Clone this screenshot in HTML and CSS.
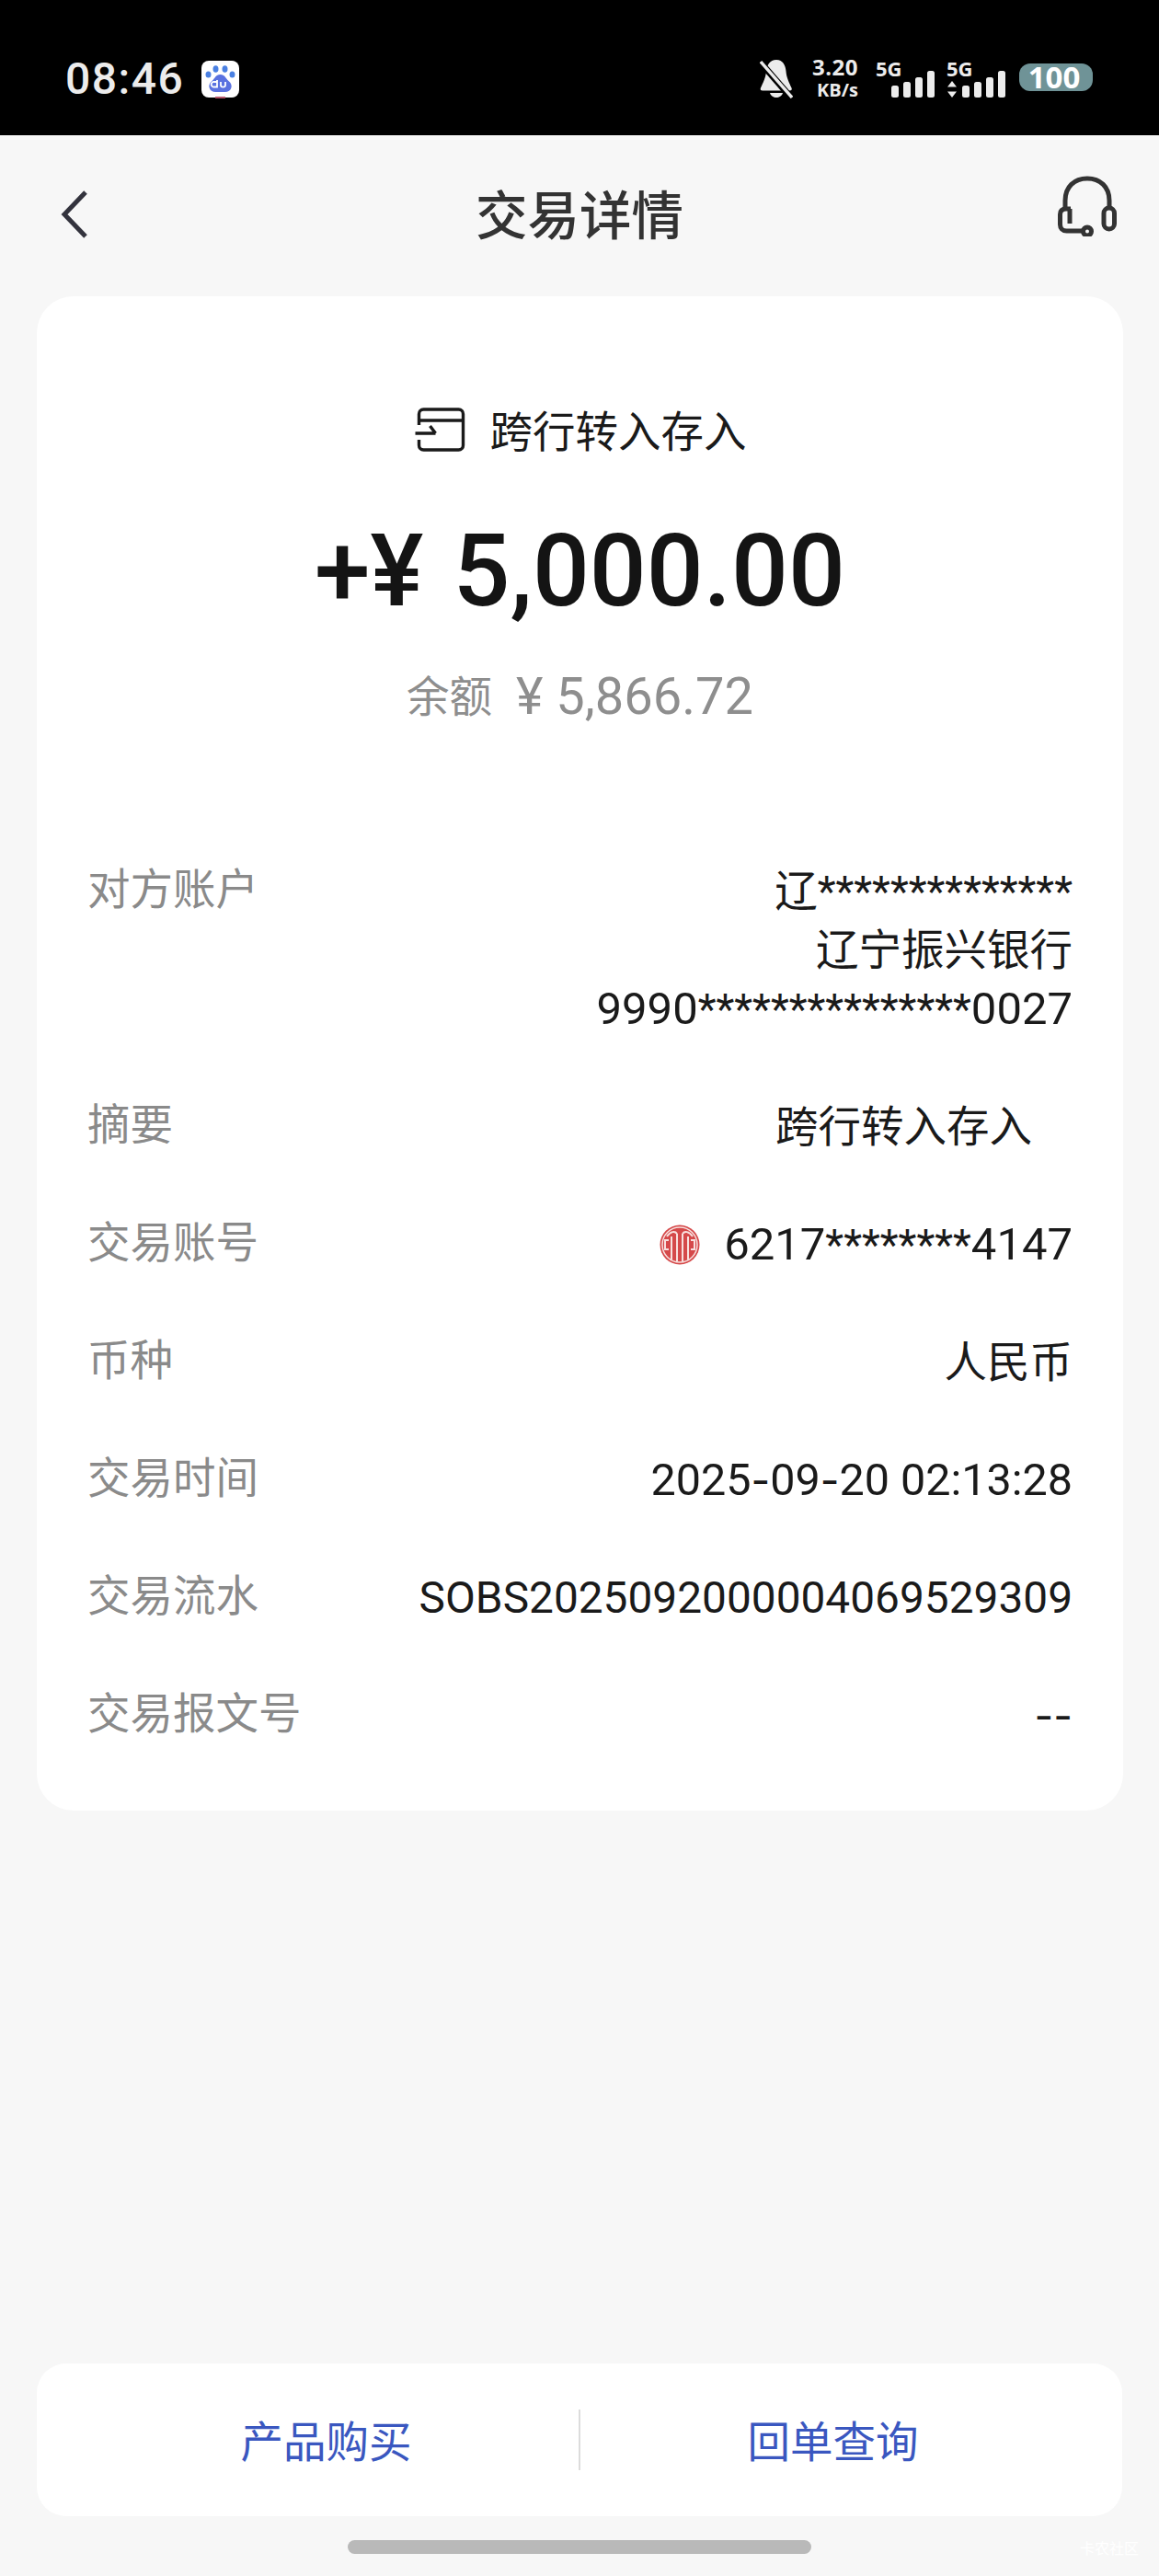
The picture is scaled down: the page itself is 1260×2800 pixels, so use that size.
FILE: index.html
```html
<!DOCTYPE html>
<html lang="zh-CN">
<head>
<meta charset="utf-8">
<title>交易详情</title>
<link rel="stylesheet" href="styles.css">
</head>
<body>
<div class="page">
  <header class="status">
    <div class="status-left">
      <span class="time">08:46</span>
      <svg class="baidu" viewBox="0 0 41 41">
        <rect width="41" height="40" rx="8" fill="#fff"/>
        <rect x="15" y="39" width="11" height="2" fill="#b5566a"/>
        <g fill="#4a80e2">
          <ellipse cx="7.5" cy="15" rx="3" ry="3.6"/>
          <ellipse cx="15.5" cy="9" rx="3" ry="3.8"/>
          <ellipse cx="25.5" cy="9" rx="3" ry="3.8"/>
          <ellipse cx="33.5" cy="15" rx="3" ry="3.6"/>
        </g>
        <path d="M20.5 15c5 0 6 4.500 9 7 3 2.500 3.500 5 3 7-.7 3.300-3.500 5-7 5h-10c-3.500 0-6.300-1.700-7-5-.5-2 0-4.500 3-7 3-2.500 4-7 9-7z" fill="#5a72e0"/>
        <path d="M17 21v7.500h-3a2.800 2.800 0 1 1 0-5.500h3M21 23v3.500c0 2.800 5 2.800 5 0V23" fill="none" stroke="#fff" stroke-width="1.800"/>
      </svg>
    </div>
    <div class="status-right">
      <svg class="bell" viewBox="0 0 36 43">
        <path d="M18 1c7 0 10 6 10.500 12.500.5 7 3.500 12.500 6 18 .8 2 0 3-2 3H3c-2 0-2.800-1-2-3 2.500-5.500 5.500-11 6-18C7.500 7 11 1 18 1z" fill="#ececec"/>
        <path d="M11 37h14c-1 3.500-4 5-7 5s-6-1.500-7-5z" fill="#ececec"/>
        <path d="M1 4l33 38" stroke="#000" stroke-width="7"/>
        <path d="M1 3l34 39" stroke="#ececec" stroke-width="3.400"/>
      </svg>
      <div class="speed">
        <span class="speed-num">3.20</span>
        <span class="speed-unit">KB/s</span>
      </div>
      <div class="signal">
        <span class="net">5G</span>
        <div class="bars">
          <i class="bar b1"></i><i class="bar b2"></i><i class="bar b3"></i><i class="bar b4"></i>
        </div>
      </div>
      <div class="signal signal-data">
        <span class="net">5G</span>
        <svg class="updown" viewBox="0 0 10 18"><path d="M5 0l5 6.500H0zM5 18L0 11.500h10z" fill="#ececec"/></svg>
        <div class="bars">
          <i class="bar b1"></i><i class="bar b2"></i><i class="bar b3"></i><i class="bar b4"></i>
        </div>
      </div>
      <span class="battery">100</span>
    </div>
  </header>

  <nav class="nav">
    <svg class="back" viewBox="0 0 30 52"><path d="M27 2L4 26l23 24" fill="none" stroke="#33333d" stroke-width="5"/></svg>
    <h1 class="title">交易详情</h1>
    <svg class="headset" viewBox="0 0 64 66">
      <g fill="none" stroke="#333" stroke-width="5">
        <path d="M8 35V27C8 12 18 3 32 3s24 9 24 24v8"/>
        <rect x="50" y="35" width="11.500" height="23" rx="5.700"/>
        <path d="M14 36H9C5 36 2.500 38 2.500 42v11c0 4 2.500 7 7 7H27"/>
        <path d="M13 36v16"/>
        <circle cx="32" cy="60.500" r="4.500"/>
      </g>
    </svg>
  </nav>

  <main class="card">
    <div class="summary">
      <div class="kind">
        <svg class="kind-icon" viewBox="0 0 56 48">
          <g fill="none" stroke="#1a1a1a" stroke-width="3.400">
            <path d="M5 19V7c0-3 2-5 5-5h38c3 0 5 2 5 5v34c0 3-2 5-5 5H10c-3 0-5-2-5-5v-6"/>
            <path d="M5 14h48"/>
            <path d="M1 28h22M17 20l6 8"/>
          </g>
        </svg>
        <span class="kind-text">跨行转入存入</span>
      </div>
      <div class="amount">+¥ 5,000.00</div>
      <div class="balance"><span class="balance-label">余额</span><span class="balance-num">¥ 5,866.72</span></div>
    </div>

    <dl class="rows">
      <div class="row">
        <dt>对方账户</dt>
        <dd>辽<span class="mask">**************</span><br>辽宁振兴银行<br><span class="num">9990</span><span class="mask">***************</span><span class="num">0027</span></dd>
      </div>
      <div class="row">
        <dt>摘要</dt>
        <dd class="memo">跨行转入存入</dd>
      </div>
      <div class="row">
        <dt>交易账号</dt>
        <dd class="account">
          <svg class="bank" viewBox="0 0 44 44">
            <circle cx="22" cy="22" r="21.500" fill="#d5494a"/>
            <circle cx="22" cy="22" r="19" fill="none" stroke="#f8e0de" stroke-width="1.500"/>
            <g fill="none" stroke="#f8e0de" stroke-width="2">
              <path d="M13 38V13M31 38V13M19 40V10M25 40V10"/>
              <path d="M8 13C12 7 17 7 19 10M36 13C32 7 27 7 25 10"/>
              <path d="M10 17H6v10h4M34 17h4v10h-4"/>
            </g>
          </svg>
          <span><span class="num">6217</span><span class="mask">********</span><span class="num">4147</span></span>
        </dd>
      </div>
      <div class="row">
        <dt>币种</dt>
        <dd>人民币</dd>
      </div>
      <div class="row">
        <dt>交易时间</dt>
        <dd class="num">2025<span class="dash">-</span>09<span class="dash">-</span>20 02:13:28</dd>
      </div>
      <div class="row">
        <dt>交易流水</dt>
        <dd class="serial">SOBS2025092000004069529309</dd>
      </div>
      <div class="row">
        <dt>交易报文号</dt>
        <dd><span class="dash">-</span><span class="dash">-</span></dd>
      </div>
    </dl>
  </main>

  <footer class="actions">
    <a class="action">产品购买</a>
    <span class="divider"></span>
    <a class="action">回单查询</a>
  </footer>

  <div class="home-bar"></div>
  <span class="watermark">卡农社区</span>
</div>
</body>
</html>
```
FILE: styles.css
```css
* { box-sizing: border-box; }
html, body { margin: 0; padding: 0; }
body {
  background: #f7f7f7;
  font-family: "Noto Sans CJK SC", "Noto Sans", sans-serif;
  color: #1a1a1a;
}
.page {
  position: relative;
  width: 1260px;
  height: 2800px;
  overflow: hidden;
  display: flex;
  flex-direction: column;
  background: #f7f7f7;
}

/* status bar */
.status {
  height: 147px;
  flex: none;
  background: #000;
  color: #ececec;
  display: flex;
  justify-content: space-between;
  padding: 0 72px 0 71px;
  font-family: "Open Sans", "Noto Sans", sans-serif;
}
.status-left { display: flex; align-items: center; gap: 19px; padding-top: 25px; }
.time {
  font-family: Roboto, sans-serif;
  font-size: 48px;
  line-height: 60px;
  font-weight: 500;
  letter-spacing: 1.500px;
}
.baidu { width: 41px; height: 41px; display: block; }
.status-right { display: flex; align-items: flex-start; padding-top: 60px; }
.bell { width: 36px; height: 43px; margin: 4px 17px 0 0; display: block; }
.speed {
  width: 54px;
  display: flex;
  flex-direction: column;
  align-items: flex-end;
  font-weight: 700;
  margin-right: 19px;
}
.speed-num { font-size: 24px; line-height: 26px; letter-spacing: .5px; }
.speed-unit { font-size: 20px; line-height: 20px; margin-top: 2px; }
.signal { position: relative; width: 64px; height: 43px; margin: 4px 13px 0 0; }
.signal .net {
  position: absolute;
  left: 0;
  top: -2px;
  font-size: 22px;
  line-height: 24px;
  font-weight: 700;
}
.bars {
  position: absolute;
  right: 0;
  bottom: 1px;
  display: flex;
  align-items: flex-end;
  gap: 5px;
}
.bar { display: block; width: 8px; background: #ececec; border-radius: 2.500px; }
.b1 { height: 13px; }
.b2 { height: 17px; }
.b3 { height: 22px; }
.b4 { height: 29px; }
.updown { position: absolute; left: 1px; bottom: 1px; width: 10px; height: 18px; }
.signal-data { margin-right: 15px; }
.battery {
  width: 80px;
  height: 30px;
  margin-top: 9px;
  padding-right: 4px;
  border-radius: 12px;
  background: #6f9397;
  color: #fff;
  font-family: "Open Sans", sans-serif;
  font-size: 33px;
  line-height: 30px;
  font-weight: 700;
  text-align: center;
}

/* nav */
.nav {
  height: 175px;
  flex: none;
  position: relative;
  display: flex;
  align-items: center;
  justify-content: space-between;
  padding: 0 46px 0 66px;
}
.back { width: 30px; height: 52px; display: block; margin-top: -3px; }
.title {
  margin: 0;
  font-size: 56.500px;
  line-height: 70px;
  font-weight: 500;
  color: #333;
  position: absolute;
  left: 0;
  right: 0;
  top: 48px;
  text-align: center;
}
.headset { width: 64px; height: 66px; display: block; margin-top: -21px; }

/* detail card */
.card {
  margin: 0 39px 0 40px;
  height: 1646px;
  flex: none;
  background: #fff;
  border-radius: 40px;
  padding: 0 55px;
}
.summary { display: flex; flex-direction: column; align-items: center; }
.kind {
  display: flex;
  align-items: center;
  gap: 26px;
  margin-top: 113px;
  height: 64px;
  font-size: 46.500px;
  line-height: 64px;
}
.kind-text { padding-bottom: 2px; }
.kind-icon { width: 57px; height: 48px; display: block; }
.amount {
  margin-top: 62px;
  font-family: Roboto, sans-serif;
  font-size: 109px;
  line-height: 120px;
  font-weight: 500;
  word-spacing: 5px;
  color: #141414;
}
.balance {
  margin-top: 41px;
  display: flex;
  align-items: center;
  gap: 26px;
  color: #8e8e8e;
  font-size: 46.500px;
  line-height: 64px;
}
.balance-label { padding-bottom: 6px; }
.balance-num { font-family: Roboto, sans-serif; font-size: 56px; }

.rows {
  margin: 0;
  padding-top: 139px;
  display: flex;
  flex-direction: column;
  gap: 58px;
  font-size: 46.500px;
  line-height: 64px;
}
.row { display: flex; justify-content: space-between; align-items: flex-start; }
.row dt { color: #8a8a8a; }
.row dd {
  margin: 0;
  padding-top: 6px;
  text-align: right;
  font-family: Roboto, "Noto Sans CJK SC", sans-serif;
  color: #1a1a1a;
}
.row dd.num { font-size: 48.500px; }
.num { font-size: 49px; }
.serial { font-size: 47.800px; }
.mask { font-size: 46px; }
.dash { font-family: Inter, sans-serif; font-size: 45px; }
.memo { padding-right: 44px; }
.account { display: flex; align-items: center; gap: 26px; }
.bank { width: 44px; height: 44px; display: block; }

/* actions */
.actions {
  margin: auto 40px 0;
  height: 166px;
  flex: none;
  background: #fff;
  border-radius: 32px;
  display: flex;
  align-items: center;
  padding: 0 40px;
}
.action {
  flex: 1;
  text-align: center;
  font-size: 46.500px;
  line-height: 64px;
  padding-bottom: 3px;
  color: #3a57c0;
}
.divider { width: 2px; height: 66px; background: #dcdcdc; }
.home-bar {
  flex: none;
  margin: 26px auto 24px;
  width: 504px;
  height: 15px;
  border-radius: 8px;
  background: #b9b9b9;
}
.watermark {
  position: absolute;
  right: 22px;
  bottom: 22px;
  font-size: 16px;
  line-height: 18px;
  color: #fff;
}
```
